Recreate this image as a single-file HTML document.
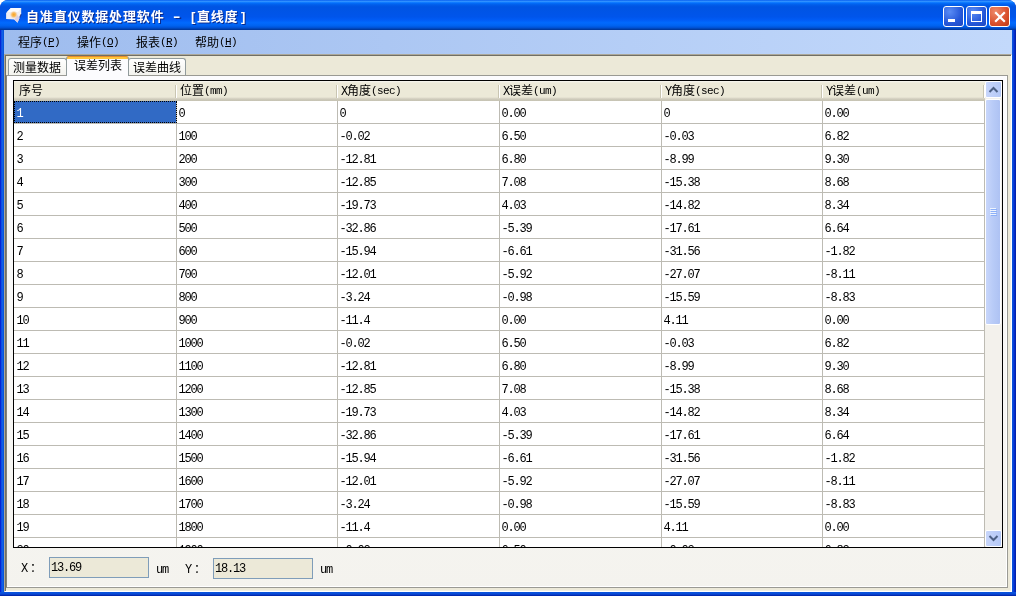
<!DOCTYPE html>
<html><head><meta charset="utf-8"><title>自准直仪数据处理软件 - [直线度]</title>
<style>
html,body{margin:0;padding:0;}
body{width:1016px;height:596px;overflow:hidden;position:relative;background:#fff;
 font-family:"Liberation Mono","Noto Sans CJK SC",sans-serif;font-size:12px;line-height:14px;color:#000;}
div{box-sizing:border-box;}
#frame{position:absolute;left:0;top:0;width:1016px;height:596px;border-radius:8px 8px 0 0;overflow:hidden;
 background:linear-gradient(to right,#0019cf 0,#0831d9 1px,#166aee 2px,#0855dd 3px,#0855dd 1012px,#0a4fd8 1013px,#0831d9 1014px,#001ea0 1016px);}
#fbot{position:absolute;left:0;top:592px;width:1016px;height:4px;background:linear-gradient(#0855dd,#0a4ad6 50%,#001ea0);}
#title{position:absolute;left:0;top:0;width:1016px;height:30px;
 background:linear-gradient(to bottom,#0058ee 0%,#3593ff 4%,#288eff 6%,#127dff 8%,#036ffc 10%,#0262ee 14%,#0057e5 20%,#0054e3 24%,#0055eb 56%,#005bf5 66%,#026afe 76%,#0062ef 86%,#0052d6 92%,#0040ab 97%,#003092 100%);}
#ttext{position:absolute;left:26px;top:8px;font-family:"Liberation Sans","Noto Sans CJK SC",sans-serif;font-weight:bold;font-size:13px;letter-spacing:0.7px;line-height:18px;color:#fff;white-space:nowrap;text-shadow:1px 1px 0 #0a2a8c;}
#ttext span{position:absolute;top:0;}
.tb{position:absolute;top:6px;width:21px;height:21px;border:1px solid #fff;border-radius:3px;background:radial-gradient(circle at 30% 25%,#5a8cf5,#2557d8 60%,#1c47c2);}
#bclose{background:radial-gradient(circle at 30% 25%,#ee8a6a,#d9502c 60%,#c13a14);}
#menu{position:absolute;left:4px;top:30px;width:1008px;height:24px;background:linear-gradient(to right,#9ebcee,#c3d9fb);}
.mi{position:absolute;top:7px;white-space:nowrap;}
#client{position:absolute;left:4px;top:54px;width:1008px;height:538px;background:#ece9d8;border:1px solid;border-color:#aca899 #fff #fff #aca899;box-shadow:inset 1px 1px 0 #716f64,inset -1px -1px 0 #f1efe2;}
.tab{position:absolute;border:1px solid #919b9c;border-bottom:none;border-radius:3px 3px 0 0;background:linear-gradient(#fff,#f3f3ee);white-space:nowrap;}
#page{position:absolute;left:6px;top:75px;width:1002px;height:513px;background:linear-gradient(#fcfcfe,#f4f3ee);border:1px solid #9a9a94;border-left-color:#85837a;box-shadow:inset -1px -1px 0 #fff;}
#grid{position:absolute;left:13px;top:80px;width:990px;height:468px;border:1px solid #000;background:#fff;overflow:hidden;}
#hdr{position:absolute;left:0;top:0;width:971px;height:20px;background:linear-gradient(#f8f7f1 0,#f1efe4 1px,#ece9d8 2px,#ece9d8 16px,#dedacb 17px,#cfcbbc 18px,#c5c2b2 20px);}
.h{position:absolute;top:0;height:19px;padding:4px 0 0 3px;white-space:nowrap;}
.hs{position:absolute;top:4px;width:2px;height:13px;border-left:1px solid #c9c5b2;border-right:1px solid #fff;}
#rows{position:absolute;left:0;top:20px;}
.r{position:relative;height:23px;width:971px;border-bottom:1px solid #bdbbb3;}
.c{position:absolute;top:0;height:22px;padding:6px 0 0 1.5px;border-right:1px solid #bdbbb3;white-space:nowrap;}
.c0{left:0;width:163px}.c1{left:163px;width:161px}.c2{left:324px;width:162px}.c3{left:486px;width:162px}.c4{left:648px;width:161px}.c5{left:809px;width:162px}
.h.c0{padding-left:5px}.c.c0{padding-left:2.5px}
.sel .c0{background:#316ac5;color:#fff;outline:1px dotted #000;outline-offset:-1px;}
.c,.h,.mi,.lbl,.inp{letter-spacing:-1.2px;}
.cj{letter-spacing:0;}
.lt{font-size:11px;letter-spacing:-0.6px;position:relative;top:-1px;}
.mi .lt{top:-2px;}
#sb{position:absolute;left:971px;top:0;width:17px;height:466px;background:#f3f1ec;}
.sbtn{position:absolute;left:0;width:17px;height:17px;background:linear-gradient(to right,#c8d6fb,#b4c8f6);border:1px solid #fff;border-radius:2px;}
#thumb{position:absolute;left:0;top:18px;width:16px;height:226px;background:linear-gradient(to right,#c8d6fb,#b8cbf7 50%,#aec2f3);border:1px solid #fff;border-radius:2px;}
.lbl{position:absolute;white-space:nowrap;}
.inp{position:absolute;width:100px;height:21px;border:1px solid #7f9db9;background:#ece9d8;padding:3px 0 0 1px;white-space:nowrap;}
</style></head><body>
<div id="frame" style="will-change:transform">
<div id="title"></div>
<div id="fbot"></div>
<svg width="18" height="18" style="position:absolute;left:5px;top:6px" viewBox="0 0 18 18"><defs><radialGradient id="og" cx="50%" cy="50%" r="50%"><stop offset="0" stop-color="#f9a21c"/><stop offset="0.5" stop-color="#f7b85a" stop-opacity="0.9"/><stop offset="1" stop-color="#f3d9c0" stop-opacity="0"/></radialGradient></defs><polygon points="5.9,1.9 16.2,1.9 16.2,8 12.5,16.8 9.2,13.6 1.1,13.1 1.1,6.9" fill="#efedf3"/><polygon points="5.9,1.9 16.2,1.9 13,6 2,6" fill="#fbfbfd"/><polygon points="9.2,13.6 12.5,9 14.5,12 12.5,16.8" fill="#d9cfe4"/><path d="M16.2 8.3L14.7 11.5" stroke="#1b2a7a" stroke-width="1.1" stroke-opacity="0.8" fill="none"/><circle cx="8.8" cy="8.7" r="4.2" fill="url(#og)"/></svg>
<div id="ttext"><span style="left:0;letter-spacing:0.85px">自准直仪数据处理软件</span><span style="left:147px;transform:scaleX(1.7);transform-origin:0 50%">-</span><span style="left:165px">[</span><span style="left:171px">直线度</span><span style="left:215px">]</span></div>
<div class="tb" id="bmin" style="left:943px"><svg width="19" height="19" style="position:absolute;left:0;top:0"><rect x="4" y="12" width="7" height="3" fill="#fff"/></svg></div>
<div class="tb" id="bmax" style="left:966px"><svg width="19" height="19" style="position:absolute;left:0;top:0"><path d="M4 4h11v11h-11z M5 7v7h9v-7z" fill="#fff" fill-rule="evenodd"/></svg></div>
<div class="tb" id="bclose" style="left:989px"><svg width="19" height="19" style="position:absolute;left:0;top:0"><path d="M5.2 5.2l9.6 9.6M14.8 5.2l-9.6 9.6" stroke="#fff" stroke-width="2.2" fill="none"/></svg></div>
<div id="menu">
<div class="mi" style="left:14px"><span class="cj">程序</span><span class="lt">(<u>P</u>)</span></div>
<div class="mi" style="left:73px"><span class="cj">操作</span><span class="lt">(<u>O</u>)</span></div>
<div class="mi" style="left:132px"><span class="cj">报表</span><span class="lt">(<u>R</u>)</span></div>
<div class="mi" style="left:191px"><span class="cj">帮助</span><span class="lt">(<u>H</u>)</span></div>
</div>
<div id="client"></div>
<div id="page"></div>
<div class="tab" style="left:8px;top:58px;width:59px;height:17px;padding:3px 0 0 4px;">测量数据</div>
<div class="tab" style="left:128px;top:58px;width:58px;height:17px;padding:3px 0 0 4px;">误差曲线</div>
<div class="tab" style="left:66px;top:56px;width:63px;height:20px;padding:3px 0 0 7px;background:linear-gradient(#ffc73c 0,#ffc73c 2px,#fcfcfe 2px);border-top:1px solid #e68b2c;">误差列表</div>
<div id="grid">
<div id="hdr"><div class="h c0"><span class="cj">序号</span></div><div class="h c1"><span class="cj">位置</span><span class="lt">(mm)</span></div><div class="h c2">X<span class="cj">角度</span><span class="lt">(sec)</span></div><div class="h c3">X<span class="cj">误差</span><span class="lt">(um)</span></div><div class="h c4">Y<span class="cj">角度</span><span class="lt">(sec)</span></div><div class="h c5">Y<span class="cj">误差</span><span class="lt">(um)</span></div><div class="hs" style="left:161px"></div><div class="hs" style="left:322px"></div><div class="hs" style="left:484px"></div><div class="hs" style="left:646px"></div><div class="hs" style="left:807px"></div><div class="hs" style="left:969px"></div></div>
<div id="rows">
<div class="r sel"><div class="c c0">1</div><div class="c c1">0</div><div class="c c2">0</div><div class="c c3">0.00</div><div class="c c4">0</div><div class="c c5">0.00</div></div>
<div class="r"><div class="c c0">2</div><div class="c c1">100</div><div class="c c2">-0.02</div><div class="c c3">6.50</div><div class="c c4">-0.03</div><div class="c c5">6.82</div></div>
<div class="r"><div class="c c0">3</div><div class="c c1">200</div><div class="c c2">-12.81</div><div class="c c3">6.80</div><div class="c c4">-8.99</div><div class="c c5">9.30</div></div>
<div class="r"><div class="c c0">4</div><div class="c c1">300</div><div class="c c2">-12.85</div><div class="c c3">7.08</div><div class="c c4">-15.38</div><div class="c c5">8.68</div></div>
<div class="r"><div class="c c0">5</div><div class="c c1">400</div><div class="c c2">-19.73</div><div class="c c3">4.03</div><div class="c c4">-14.82</div><div class="c c5">8.34</div></div>
<div class="r"><div class="c c0">6</div><div class="c c1">500</div><div class="c c2">-32.86</div><div class="c c3">-5.39</div><div class="c c4">-17.61</div><div class="c c5">6.64</div></div>
<div class="r"><div class="c c0">7</div><div class="c c1">600</div><div class="c c2">-15.94</div><div class="c c3">-6.61</div><div class="c c4">-31.56</div><div class="c c5">-1.82</div></div>
<div class="r"><div class="c c0">8</div><div class="c c1">700</div><div class="c c2">-12.01</div><div class="c c3">-5.92</div><div class="c c4">-27.07</div><div class="c c5">-8.11</div></div>
<div class="r"><div class="c c0">9</div><div class="c c1">800</div><div class="c c2">-3.24</div><div class="c c3">-0.98</div><div class="c c4">-15.59</div><div class="c c5">-8.83</div></div>
<div class="r"><div class="c c0">10</div><div class="c c1">900</div><div class="c c2">-11.4</div><div class="c c3">0.00</div><div class="c c4">4.11</div><div class="c c5">0.00</div></div>
<div class="r"><div class="c c0">11</div><div class="c c1">1000</div><div class="c c2">-0.02</div><div class="c c3">6.50</div><div class="c c4">-0.03</div><div class="c c5">6.82</div></div>
<div class="r"><div class="c c0">12</div><div class="c c1">1100</div><div class="c c2">-12.81</div><div class="c c3">6.80</div><div class="c c4">-8.99</div><div class="c c5">9.30</div></div>
<div class="r"><div class="c c0">13</div><div class="c c1">1200</div><div class="c c2">-12.85</div><div class="c c3">7.08</div><div class="c c4">-15.38</div><div class="c c5">8.68</div></div>
<div class="r"><div class="c c0">14</div><div class="c c1">1300</div><div class="c c2">-19.73</div><div class="c c3">4.03</div><div class="c c4">-14.82</div><div class="c c5">8.34</div></div>
<div class="r"><div class="c c0">15</div><div class="c c1">1400</div><div class="c c2">-32.86</div><div class="c c3">-5.39</div><div class="c c4">-17.61</div><div class="c c5">6.64</div></div>
<div class="r"><div class="c c0">16</div><div class="c c1">1500</div><div class="c c2">-15.94</div><div class="c c3">-6.61</div><div class="c c4">-31.56</div><div class="c c5">-1.82</div></div>
<div class="r"><div class="c c0">17</div><div class="c c1">1600</div><div class="c c2">-12.01</div><div class="c c3">-5.92</div><div class="c c4">-27.07</div><div class="c c5">-8.11</div></div>
<div class="r"><div class="c c0">18</div><div class="c c1">1700</div><div class="c c2">-3.24</div><div class="c c3">-0.98</div><div class="c c4">-15.59</div><div class="c c5">-8.83</div></div>
<div class="r"><div class="c c0">19</div><div class="c c1">1800</div><div class="c c2">-11.4</div><div class="c c3">0.00</div><div class="c c4">4.11</div><div class="c c5">0.00</div></div>
<div class="r"><div class="c c0">20</div><div class="c c1">1900</div><div class="c c2">-0.02</div><div class="c c3">6.50</div><div class="c c4">-0.03</div><div class="c c5">6.82</div></div>
</div>
<div id="sb">
<div class="sbtn" style="top:0"><svg width="15" height="15" style="position:absolute;left:0;top:0"><path d="M3.5 10L7.5 6L11.5 10" stroke="#4d6185" stroke-width="2" fill="none"/></svg></div>
<div id="thumb"><svg width="8" height="8" style="position:absolute;left:4px;top:108px"><path d="M0 0.5h6M0 2.5h6M0 4.5h6M0 6.5h6" stroke="#eef4fe" stroke-width="1"/><path d="M1 1.5h6M1 3.5h6M1 5.5h6M1 7.5h6" stroke="#8cb0f8" stroke-width="1"/></svg></div>
<div class="sbtn" style="top:449px"><svg width="15" height="15" style="position:absolute;left:0;top:0"><path d="M3.5 5L7.5 9L11.5 5" stroke="#4d6185" stroke-width="2" fill="none"/></svg></div>
</div>
</div>
<div class="lbl" style="left:21px;top:562px">X<span class="cj" style="margin-left:3px">：</span></div>
<div class="inp" style="left:49px;top:557px">13.69</div>
<div class="lbl" style="left:156px;top:563px">um</div>
<div class="lbl" style="left:185px;top:563px">Y<span class="cj" style="margin-left:3px">：</span></div>
<div class="inp" style="left:213px;top:558px">18.13</div>
<div class="lbl" style="left:320px;top:563px">um</div>
</div>
</body></html>
